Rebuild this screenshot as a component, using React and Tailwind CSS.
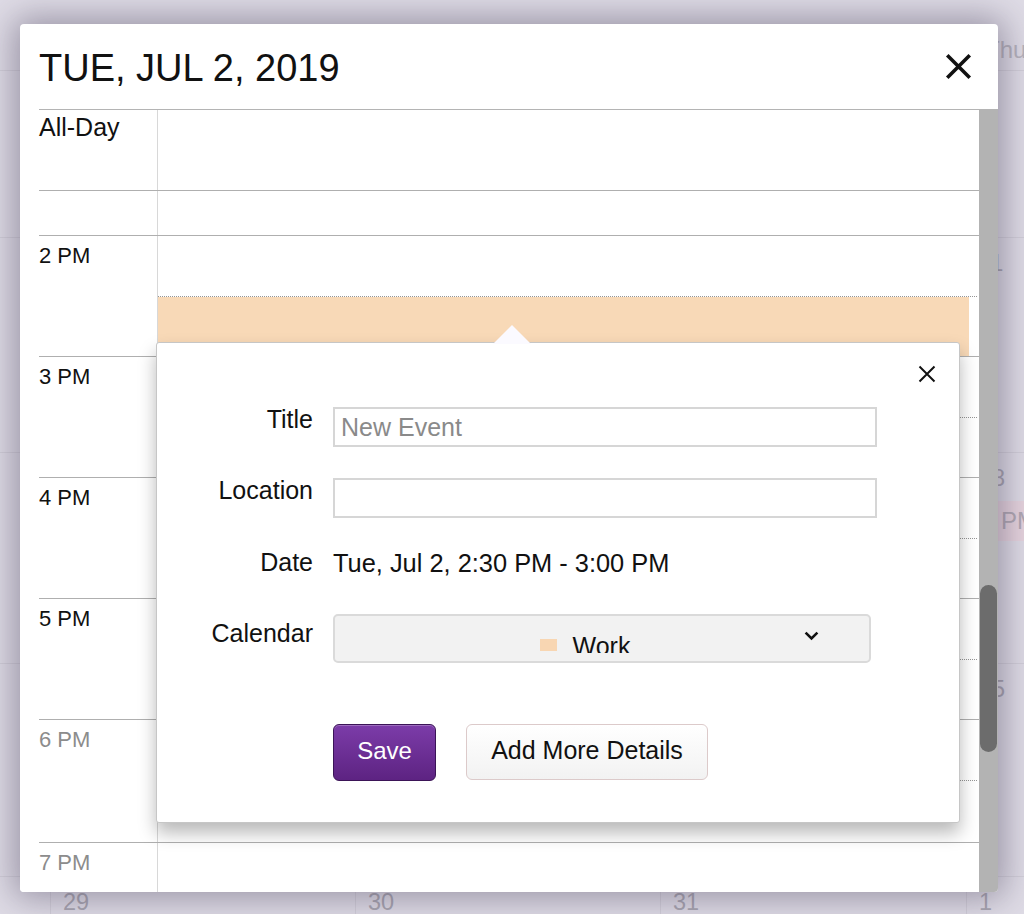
import React from "react";

function CloseIcon({ size, stroke }) {
  return (
    <svg width={size} height={size} viewBox="0 0 24 24" fill="none">
      <path d="M2 2 L22 22 M22 2 L2 22" stroke="#111" strokeWidth={stroke} strokeLinecap="butt" />
    </svg>
  );
}

function BgCell({ num, children, first }) {
  return (
    <div className={first ? "" : "border-l border-[#d2cfd9]"}>
      {num !== undefined && (
        <div className="pl-[12px] pt-[14px] text-[23.5px] leading-none text-[#a9a6b1]">{num}</div>
      )}
      {children}
    </div>
  );
}

function BgRow({ h, nums, children }) {
  return (
    <div className={`grid grid-cols-[50px_305px_305px_306px_1fr] border-t border-[#d2cfd9] ${h}`}>
      <BgCell first />
      <BgCell num={nums[0]} />
      <BgCell num={nums[1]} />
      <BgCell num={nums[2]} />
      <BgCell num={nums[3]}>{children}</BgCell>
    </div>
  );
}

function HourRow({ label, gray, h, event }) {
  return (
    <div className={`flex border-t border-[#afafaf] ${h}`}>
      <div
        className={`w-[118px] pt-[9px] text-[22px] leading-none ${gray ? "text-[#8c8c8c]" : "text-[#111]"}`}
      >
        {label}
      </div>
      <div className="flex-1 flex flex-col border-l border-[#d8d8d8] pr-[2px]">
        <div className="h-[60px]" />
        <div className="flex-1 flex border-t border-dotted border-[#959595]">
          {event && <div className="flex-1 mr-[8px] bg-[#f8d9b7]" />}
        </div>
      </div>
    </div>
  );
}

export default function App() {
  return (
    <div className="relative w-full h-[914px] overflow-hidden bg-[#dfdce6] font-['Liberation_Sans',Arial,sans-serif]">
      {/* underlying month view (mostly hidden behind the modal) */}
      <div className="flex flex-col h-full">
        <div className="grid grid-cols-[50px_305px_305px_306px_1fr] h-[70px]">
          <div />
          <div />
          <div />
          <div />
          <div className="pl-[19px] pt-[38px] text-[24px] leading-none text-[#b6b3bd]">Thu</div>
        </div>
        <BgRow h="h-[167px]" nums={[undefined, undefined, undefined, undefined]} />
        <BgRow h="h-[216px]" nums={[undefined, undefined, undefined, "11"]} />
        <BgRow h="h-[211px]" nums={[undefined, undefined, undefined, "18"]}>
          <div className="px-[9px] mt-[10px]">
            <div className="pl-[5px] h-[40px] leading-[40px] bg-[#e6d4de] text-[24px] text-[#b1a9b4] whitespace-nowrap">
              6 PM
            </div>
          </div>
        </BgRow>
        <BgRow h="h-[213px]" nums={[undefined, undefined, undefined, "25"]} />
        <BgRow h="flex-1" nums={["29", "30", "31", "1"]} />
      </div>

      {/* day modal */}
      <div className="absolute left-[20px] top-[24px] w-[978px] h-[868px] bg-white rounded-[4px] overflow-hidden shadow-[0_0_34px_6px_rgba(55,45,75,0.42)] flex flex-col">
        <div className="ml-[19px] h-[86px] shrink-0 border-b border-[#b4b4b4] flex items-center justify-between pr-[26px]">
          <div className="text-[38px] leading-none text-[#111] pt-[2px]">TUE, JUL 2, 2019</div>
          <CloseIcon size={27} stroke={3.2} />
        </div>
        <div className="flex-1 flex overflow-hidden">
          <div className="flex-1 bg-white overflow-hidden pl-[19px]">
            <div className="flex h-[80px]">
              <div className="w-[118px] pt-[5px] text-[25px] leading-none text-[#111]">All-Day</div>
              <div className="flex-1 border-l border-[#d8d8d8]" />
            </div>
            <div className="flex h-[45px] border-t border-[#afafaf]">
              <div className="w-[118px]" />
              <div className="flex-1 border-l border-[#d8d8d8]" />
            </div>
            <HourRow label="2 PM" h="h-[121px]" event />
            <HourRow label="3 PM" h="h-[121px]" />
            <HourRow label="4 PM" h="h-[121px]" />
            <HourRow label="5 PM" h="h-[121px]" />
            <HourRow label="6 PM" h="h-[123px]" gray />
            <HourRow label="7 PM" h="h-[123px]" gray />
          </div>
          <div className="w-[19px] shrink-0 bg-[#b3b3b3] relative">
            <div className="absolute left-[1px] w-[17px] top-[475px] h-[167px] rounded-full bg-[#6c6c6c]" />
          </div>
        </div>

        {/* new event popover */}
        <div className="absolute left-[136px] top-[318px] w-[804px] h-[481px] bg-white border border-[#c6c6c6] rounded-[3px] shadow-[0_10px_18px_rgba(0,0,0,0.28)]">
          <svg className="absolute left-[336px] top-[-18px]" width="38" height="19" viewBox="0 0 38 19">
            <polygon points="0,19 19,0 38,19" fill="#fbfaff" />
          </svg>
          <div className="absolute right-[23px] top-[22px]">
            <CloseIcon size={18} stroke={2.6} />
          </div>

          <div className="pt-[64px] flex flex-col text-[25px] leading-none text-[#111]">
            <div className="flex">
              <div className="w-[156px] text-right">Title</div>
              <input
                className="ml-[20px] w-[544px] h-[40px] border-2 border-[#d6d6d6] pl-[6px] text-[25px] text-[#111] placeholder:text-[#8a8a8a] outline-none bg-white"
                placeholder="New Event"
              />
            </div>
            <div className="flex mt-[31px]">
              <div className="w-[156px] text-right">Location</div>
              <input className="ml-[20px] w-[544px] h-[40px] border-2 border-[#d6d6d6] pl-[6px] text-[25px] outline-none bg-white" />
            </div>
            <div className="flex mt-[32px]">
              <div className="w-[156px] text-right">Date</div>
              <div className="ml-[20px] pt-[1px] text-[25.4px]">Tue, Jul 2, 2:30 PM - 3:00 PM</div>
            </div>
            <div className="flex mt-[38px]">
              <div className="w-[156px] text-right pt-[7px]">Calendar</div>
              <div className="ml-[20px] w-[538px] h-[49px] relative bg-[#f2f2f2] border-2 border-[#dadada] rounded-[5px]">
                <div className="h-[37px] overflow-hidden flex justify-center pr-[34px]">
                  <div className="flex items-start pt-[18px]">
                    <div className="mt-[5px] w-[17px] h-[12px] bg-[#f8d6b2]" />
                    <div className="ml-[16px]">Work</div>
                  </div>
                </div>
                <svg className="absolute right-[50px] top-[15px]" width="15" height="10" viewBox="0 0 15 10" fill="none">
                  <path d="M1.6 1.6 L7.5 7.5 L13.4 1.6" stroke="#111" strokeWidth="2.6" />
                </svg>
              </div>
            </div>
            <div className="flex mt-[61px] pl-[176px] gap-[30px]">
              <button className="w-[103px] h-[57px] rounded-[6px] border border-[#3b1457] bg-linear-to-b from-[#7c3ca9] to-[#5d2382] text-white text-[24px] pb-[4px] shadow-[inset_0_1px_0_rgba(255,255,255,0.25)]">
                Save
              </button>
              <button className="w-[242px] h-[56px] rounded-[6px] border-[1.5px] border-[#dccaca] bg-linear-to-b from-[#ffffff] to-[#f2f2f2] text-[#111] text-[25px] pb-[4px]">
                Add More Details
              </button>
            </div>
          </div>
        </div>
      </div>
    </div>
  );
}
